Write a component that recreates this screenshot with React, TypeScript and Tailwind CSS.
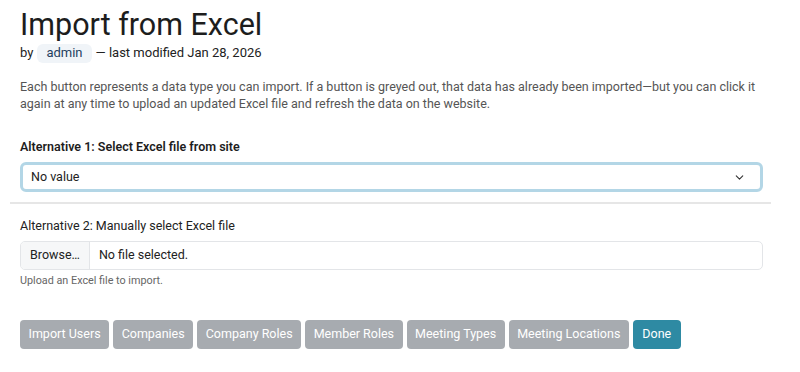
import { ChevronDown } from "lucide-react";

const steps = [
  "Import Users",
  "Companies",
  "Company Roles",
  "Member Roles",
  "Meeting Types",
  "Meeting Locations",
];

export default function App() {
  return (
    <div
      className="bg-white min-h-screen pl-[20px] pr-[37px] pt-[7px] text-[#212529]"
      style={{ fontFamily: "Roboto, 'Liberation Sans', sans-serif" }}
    >
      <h1 className="text-[30.5px] leading-[36px] text-[#1d1d1d]">Import from Excel</h1>

      <div className="flex items-center h-[20px] text-[13px] text-[#222]">
        <span>by</span>
        <span className="ml-[4px] px-[9px] h-[19px] flex items-center rounded-[6px] bg-[#f0f4f8] text-[#1f3f5f]">admin</span>
        <span className="ml-[4px]">— last modified Jan 28, 2026</span>
      </div>

      <p className="mt-[15px] text-[12.5px] leading-[17px] text-[#555]">
        Each button represents a data type you can import. If a button is greyed out, that data has already been
        imported—but you can click it again at any time to upload an updated Excel file and refresh the data on the
        website.
      </p>

      {/* alternativa 1 */}
      <div className="mt-[26px] text-[12.5px] leading-[18px] font-semibold text-[#1d1d1d]">
        Alternative 1: Select Excel file from site
      </div>
      <div className="mt-[6px] h-[30px] flex items-center justify-between border-[3px] border-[#b3d6e6] rounded-[6px] bg-white px-[8px] text-[12.5px] text-[#222]">
        <span>No value</span>
        <ChevronDown size={13} strokeWidth={2} className="text-[#333] mr-[6px]" />
      </div>

      <hr className="mt-[10px] -ml-[10px] -mr-[8px] border-t-2 border-[#e6e6e6]" />

      {/* alternativa 2 */}
      <div className="mt-[13px] text-[12.5px] leading-[18px] text-[#222]">Alternative 2: Manually select Excel file</div>
      <div className="mt-[6px] h-[29px] flex border border-[#e3e5e8] rounded-[5px] bg-white text-[12.5px] text-[#222] overflow-hidden">
        <div className="px-[9px] flex items-center bg-[#f6f7f8] border-r border-[#e3e5e8]">Browse…</div>
        <div className="px-[9px] flex items-center">No file selected.</div>
      </div>
      <div className="mt-[4px] text-[10.8px] leading-[14px] text-[#666]">Upload an Excel file to import.</div>

      <div className="mt-[32px] flex gap-[4px]">
        {steps.map((s) => (
          <button
            key={s}
            className="h-[29px] px-[8.5px] rounded-[4px] bg-[#a7abb0] text-white text-[12.5px]"
          >
            {s}
          </button>
        ))}
        <button className="h-[29px] px-[9.5px] rounded-[4px] bg-[#2e8aa3] text-white text-[12.5px]">Done</button>
      </div>
    </div>
  );
}
